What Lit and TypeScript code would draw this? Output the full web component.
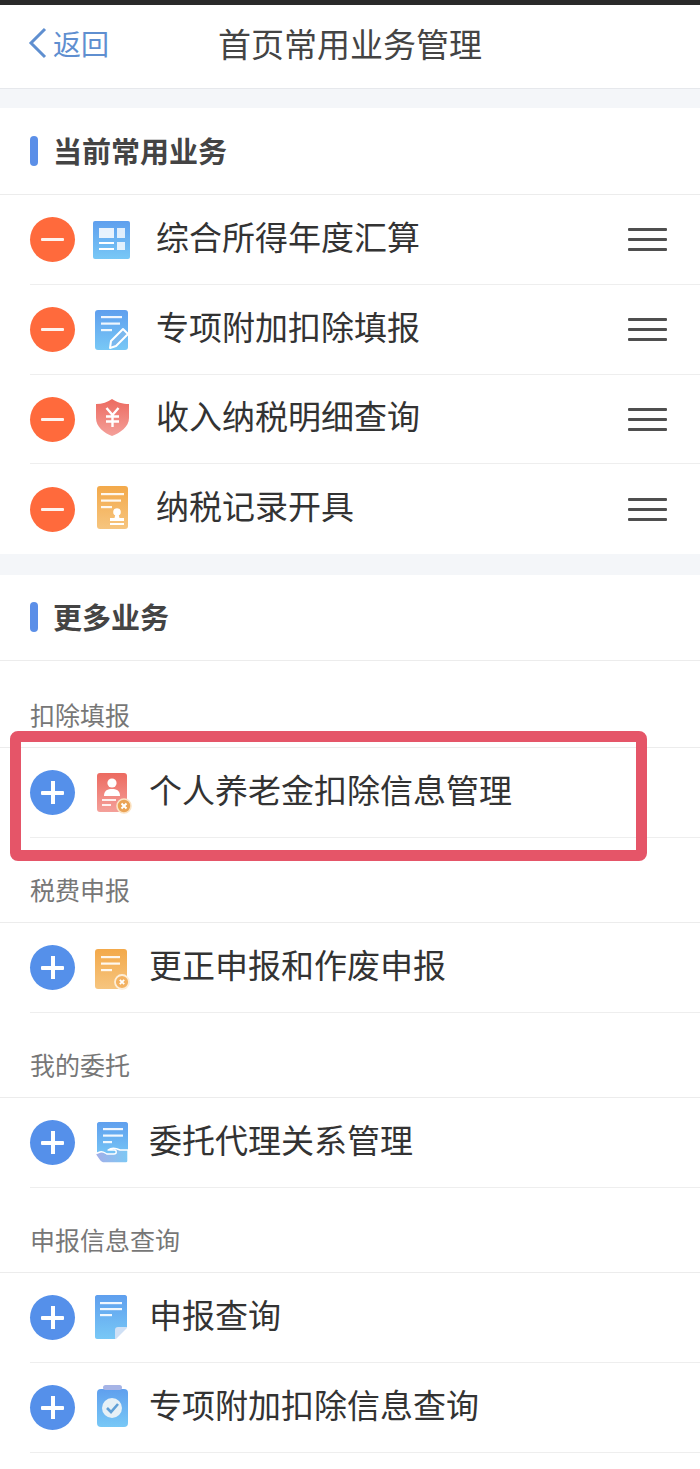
import { LitElement, html, css, svg } from "lit";
import { customElement } from "lit/decorators.js";

const defs = svg`<defs>
  <linearGradient id="gb" x1="0" y1="0" x2="0" y2="1"><stop offset="0" stop-color="#5f9fee"/><stop offset="1" stop-color="#78c8f6"/></linearGradient>
  <linearGradient id="gr" x1="0" y1="0" x2="0" y2="1"><stop offset="0" stop-color="#ec6a60"/><stop offset="1" stop-color="#f4a09a"/></linearGradient>
  <linearGradient id="go" x1="0" y1="0" x2="0" y2="1"><stop offset="0" stop-color="#f3a94a"/><stop offset="1" stop-color="#f6c57f"/></linearGradient>
  <linearGradient id="gh" x1="0" y1="0" x2="1" y2="0"><stop offset="0" stop-color="#a5aee8"/><stop offset="1" stop-color="#7cc8f4"/></linearGradient>
</defs>`;

const lines = (x: number, y: number, w: number[], step = 6.5) =>
  w.map((v, i) => svg`<rect x=${x} y=${y + i * step} width=${v} height="2.2" fill="#fff" fill-opacity=".9"/>`);

const icons: Record<string, unknown> = {
  panels: svg`<rect x="1" y="4" width="37" height="38" rx="2" fill="url(#gb)"/>
    <rect x="7" y="11" width="15" height="10" fill="#fff" fill-opacity=".85"/><rect x="25" y="11" width="8" height="10" fill="#fff" fill-opacity=".8"/>
    <rect x="7" y="25" width="15" height="2" fill="#fff"/><rect x="7" y="31" width="15" height="2" fill="#fff"/><rect x="25" y="25" width="8" height="8" fill="#fff" fill-opacity=".8"/>`,
  pencil: svg`<rect x="3" y="3" width="33" height="40" rx="3" fill="url(#gb)"/>
    ${lines(9, 9, [21, 19, 11], 6.5)}
    <path d="M18 41 L19 34 L31 22 L36 27 L24 39 Z" fill="#7ab8ee" stroke="#fff" stroke-width="2" stroke-linejoin="round"/>`,
  shield: svg`<path d="M20 3 C24 6 31 8 37 8 V22 C37 31 28 37 20 40 C12 37 4 31 4 22 V8 C10 8 16 6 20 3 Z" fill="url(#gr)"/>
    <path d="M14.5 12 L20.5 19 L26.5 12 M20.5 19 V31 M14 20.5 H27 M14 25.5 H27" fill="none" stroke="#fff" stroke-width="2.4"/>`,
  stamp: svg`<rect x="5" y="0" width="31" height="43" rx="3" fill="url(#go)"/>
    ${lines(9, 7, [23, 20, 11], 6.5)}
    <circle cx="25" cy="26" r="3.8" fill="#fff"/><path d="M23.5 28 H26.5 L27.5 32 H32 V35 H18 V32 H22.5 Z" fill="#fff"/><rect x="18" y="37" width="14" height="2" fill="#fff"/>`,
  person: svg`<rect x="5" y="3" width="30" height="39" rx="3" fill="url(#gr)"/>
    <circle cx="20" cy="13" r="4.6" fill="#fff"/><path d="M12 26 C12 20 16 19 20 19 C24 19 28 20 28 26 Z" fill="#fff"/>
    <rect x="10" y="29" width="14" height="2" fill="#fff" fill-opacity=".85"/><rect x="10" y="34" width="9" height="2" fill="#fff" fill-opacity=".85"/>
    <circle cx="32" cy="36" r="7" fill="#eaa356" stroke="#fbe3c4" stroke-width="1.6"/><path d="M29.5 33.5 L34.5 38.5 M34.5 33.5 L29.5 38.5" stroke="#fff" stroke-width="2"/>`,
  cancel: svg`<rect x="3" y="4" width="32" height="40" rx="3" fill="url(#go)"/>
    ${lines(9, 11, [19, 19, 11], 6.5)}
    <circle cx="30" cy="37" r="7" fill="#f3b261" stroke="#fdeed8" stroke-width="1.8"/><path d="M27.8 34.8 L32.2 39.2 M32.2 34.8 L27.8 39.2" stroke="#fff" stroke-width="1.8"/>`,
  hand: svg`<path d="M7 2 H34 C35 2 36 3 36 4 V38 H5 V4 C5 3 6 2 7 2 Z" fill="url(#gb)"/>
    ${lines(11, 8, [20, 20, 9], 6.5)}
    <path d="M3 34 L8 32 C11 31 13 33 15 34 H22 C25 34 25 30 22 30 H16 C20 27 24 28 28 30 H36 V41 C36 42 35 43 34 43 H11 C8 43 6 38 3 34 Z" fill="url(#gh)" stroke="#fff" stroke-width="1.4" stroke-linejoin="round"/>`,
  page: svg`<path d="M5 0 H33 C34 0 35 1 35 2 V32 L23 44 H5 C4 44 3 43 3 42 V2 C3 1 4 0 5 0 Z" fill="url(#gb)"/>
    <path d="M35 32 V33 L24 44 H23 V35 C23 33 24 32 26 32 Z" fill="#cfe0f5"/>
    ${lines(8, 7, [22, 22, 12], 6)}`,
  check: svg`<rect x="5" y="4" width="31" height="38" rx="4" fill="url(#gb)"/>
    <rect x="11" y="0" width="19" height="5" rx="2.5" fill="#a6b4e6"/>
    <circle cx="20" cy="23" r="10" fill="#e6f0f6"/><path d="M15 23 L19 27 L26 19" fill="none" stroke="#5f9fd6" stroke-width="2.6"/>`,
};

interface Row { icon: string; name: string }
const current: Row[] = [
  { icon: "panels", name: "综合所得年度汇算" },
  { icon: "pencil", name: "专项附加扣除填报" },
  { icon: "shield", name: "收入纳税明细查询" },
  { icon: "stamp", name: "纳税记录开具" },
];
const groups: { label: string; rows: Row[] }[] = [
  { label: "扣除填报", rows: [{ icon: "person", name: "个人养老金扣除信息管理" }] },
  { label: "税费申报", rows: [{ icon: "cancel", name: "更正申报和作废申报" }] },
  { label: "我的委托", rows: [{ icon: "hand", name: "委托代理关系管理" }] },
  { label: "申报信息查询", rows: [{ icon: "page", name: "申报查询" }, { icon: "check", name: "专项附加扣除信息查询" }] },
];

@customElement("app-root")
export class AppRoot extends LitElement {
  static styles = css`
    :host { display: block; width: 700px; height: 1469px; overflow: hidden; position: relative; background: #fff;
      font-family: "Noto Sans CJK SC", "Liberation Sans", sans-serif; color: #333; }
    .status { height: 5px; background: #2a2a2a; }
    .nav { height: 83px; display: grid; grid-template-columns: 1fr auto 1fr; align-items: center; border-bottom: 1px solid #e6e8ec; }
    .back { display: flex; align-items: center; gap: 5px; padding-left: 28px; color: #5f8fd0; font-size: 28px; line-height: 40px; margin-top: -8px; }
    .title { font-size: 33px; line-height: 44px; color: #444; margin-top: -8px; }
    .band { height: 19px; background: #f4f6f9; }
    .band.b2 { height: 21px; }
    .head { box-sizing: border-box; height: 87px; display: flex; align-items: center; gap: 15px; padding-left: 30px; border-bottom: 1px solid #ececec; font-size: 29px; font-weight: 700; color: #444; line-height: 40px; }
    .head.h2 { height: 86px; padding-bottom: 2px; }
    .head span { margin-top: -2px; }
    .head i { display: block; width: 8px; height: 30px; border-radius: 4px; background: #5b8fe8; }
    .row { box-sizing: border-box; height: 89.75px; display: flex; align-items: center; padding-left: 30px; position: relative; }
    .row::after { content: ""; position: absolute; left: 30px; right: 0; bottom: 0; height: 1px; background: #eeeeee; }
    .row.last::after { display: none; }
    .btn { width: 45px; height: 45px; border-radius: 50%; flex: none; background: #ff6a3c; position: relative; }
    .btn.add { background: #5590ea; }
    .btn::before { content: ""; position: absolute; left: 11px; right: 11px; top: 21px; height: 3px; background: #fdf3ee; border-radius: 1px; }
    .btn.add::before { background: #fff; height: 4px; top: 20.5px; }
    .btn.add::after { content: ""; position: absolute; top: 11px; bottom: 11px; left: 20.5px; width: 4px; background: #fff; }
    svg.ico { width: 40px; height: 46px; margin-left: 17px; flex: none; }
    .name { font-size: 33px; line-height: 44px; color: #333; margin-top: -8px; margin-left: 17px; }
    .cur .name { margin-left: 24px; }
    .handle { margin-left: auto; margin-right: 33px; width: 39px; display: flex; flex-direction: column; gap: 7px; }
    .handle b { display: block; height: 3px; border-radius: 1px; background: #4f4f4f; }
    .label { box-sizing: border-box; height: 85.25px; border-bottom: 1px solid #ececec; padding: 33px 0 0 30px; font-size: 25px; line-height: 36px; color: #777; }
    .label.first { height: 87px; padding-top: 35px; }
    .mark { position: absolute; left: 10px; top: 731px; width: 637px; height: 130px; box-sizing: border-box; border: 11px solid #e55568; border-radius: 8px; }
  `;

  private ico(name: string) {
    return html`<svg class="ico" viewBox="0 0 40 46" aria-hidden="true">${defs}${icons[name]}</svg>`;
  }

  render() {
    return html`
      <div class="status"></div>
      <div class="nav">
        <div class="back">
          <svg width="20" height="32" viewBox="0 0 20 32"><path d="M17 2 L3 16 L17 30" fill="none" stroke="#5f8fd0" stroke-width="3"/></svg>
          <span>返回</span>
        </div>
        <div class="title">首页常用业务管理</div>
        <div></div>
      </div>
      <div class="band"></div>
      <div class="head"><i></i><span>当前常用业务</span></div>
      ${current.map((r, i) => html`
        <div class="row cur ${i === current.length - 1 ? "last" : ""}">
          <div class="btn"></div>${this.ico(r.icon)}
          <div class="name">${r.name}</div>
          <div class="handle"><b></b><b></b><b></b></div>
        </div>`)}
      <div class="band b2"></div>
      <div class="head h2"><i></i><span>更多业务</span></div>
      ${groups.map((g, gi) => html`
        <div class="label ${gi === 0 ? "first" : ""}">${g.label}</div>
        ${g.rows.map((r) => html`
          <div class="row"><div class="btn add"></div>${this.ico(r.icon)}<div class="name">${r.name}</div></div>`)}`)}
      <div class="mark"></div>
    `;
  }
}
